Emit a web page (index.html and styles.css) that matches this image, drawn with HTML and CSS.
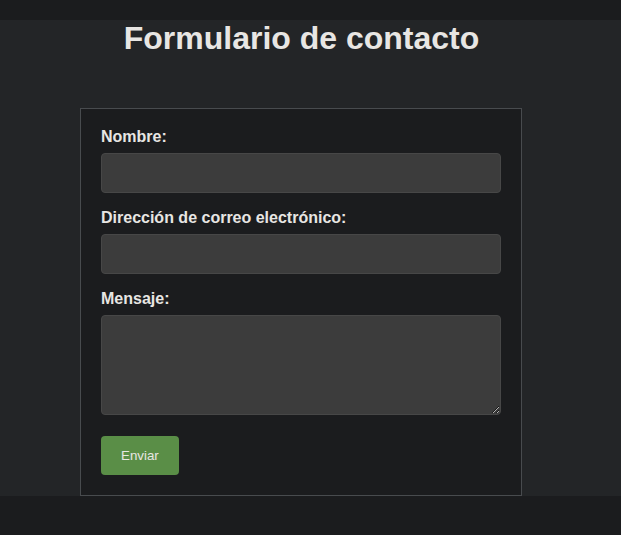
FILE: index.html
```html
<!DOCTYPE html>
<html lang="es">
<head>
<meta charset="utf-8">
<title>Formulario de contacto</title>
<link rel="stylesheet" href="styles.css">
</head>
<body>
<div class="page">
  <div class="wrap">
    <h1 class="title">Formulario de contacto</h1>
    <form class="contact">
      <label class="label" for="nombre">Nombre:</label>
      <input class="field" type="text" id="nombre">
      <label class="label" for="email">Dirección de correo electrónico:</label>
      <input class="field" type="email" id="email">
      <label class="label" for="mensaje">Mensaje:</label>
      <textarea class="field area" id="mensaje"></textarea>
      <button class="send" type="submit">Enviar</button>
    </form>
  </div>
</div>
</body>
</html>
```
FILE: styles.css
```css
html {
  background: #1b1c1e;
}
body {
  margin: 0;
  font-family: "Liberation Sans", Arial, sans-serif;
  color: #e8e6e3;
}
.page {
  margin-top: 20px;
  background: #232527;
}
.wrap {
  width: 603px;
}
.title {
  margin: 0;
  font-size: 32px;
  line-height: 37px;
  font-weight: bold;
  text-align: center;
  color: #e8e6e3;
}
.contact {
  margin: 51px 80px 0;
  width: 400px;
  padding: 19px 20px 20px;
  border: 1px solid #484b4e;
  background: #1b1c1e;
  display: flex;
  flex-direction: column;
  align-items: flex-start;
}
.label {
  display: block;
  font-size: 16px;
  line-height: 18px;
  font-weight: bold;
  margin-bottom: 7px;
  color: #e8e6e3;
}
.field {
  box-sizing: border-box;
  width: 400px;
  height: 40px;
  margin: 0 0 16px;
  padding: 10px;
  border: 1px solid #474747;
  border-radius: 4px;
  background: #3c3c3c;
  color: #e8e6e3;
  font-family: "Liberation Sans", Arial, sans-serif;
  font-size: 14px;
}
.area {
  height: 100px;
  margin-bottom: 21px;
  resize: vertical;
}
.send {
  height: 39px;
  padding: 0 20px;
  border: none;
  border-radius: 4px;
  background: #5a8e47;
  color: #e8e6e3;
  font-family: "Liberation Sans", Arial, sans-serif;
  font-size: 13.333px;
  cursor: pointer;
}
```
